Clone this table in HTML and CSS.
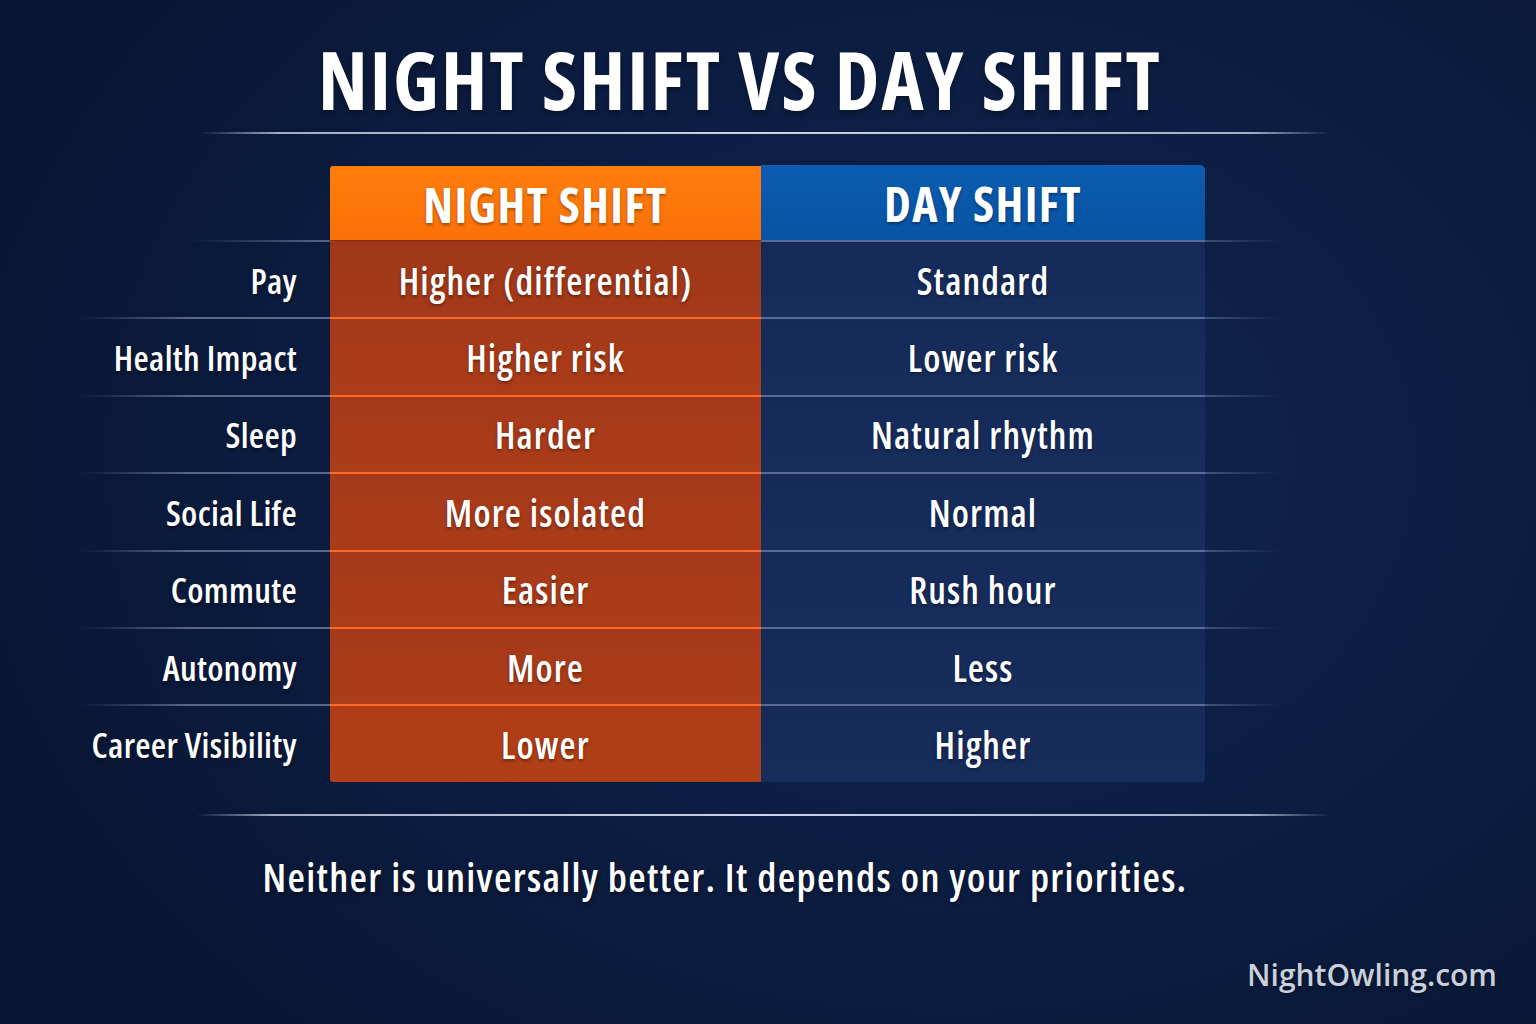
FILE: index.html
```html
<!DOCTYPE html>
<html lang="en">
<head>
<meta charset="utf-8">
<title>Night Shift vs Day Shift</title>
<link rel="stylesheet" href="styles.css">
</head>
<body>
<div class="page">
  <h1 class="title">NIGHT SHIFT VS DAY SHIFT</h1>
  <div class="rule rule-top"></div>

  <div class="table">
    <div class="row head">
      <div class="label"></div>
      <div class="cell night">NIGHT SHIFT</div>
      <div class="cell day">DAY SHIFT</div>
      <div class="pad"></div>
    </div>
    <div class="row body first">
      <div class="label">Pay</div>
      <div class="cell night">Higher (differential)</div>
      <div class="cell day">Standard</div>
      <div class="pad"></div>
    </div>
    <div class="row body">
      <div class="label">Health Impact</div>
      <div class="cell night">Higher risk</div>
      <div class="cell day">Lower risk</div>
      <div class="pad"></div>
    </div>
    <div class="row body">
      <div class="label">Sleep</div>
      <div class="cell night">Harder</div>
      <div class="cell day">Natural rhythm</div>
      <div class="pad"></div>
    </div>
    <div class="row body">
      <div class="label">Social Life</div>
      <div class="cell night">More isolated</div>
      <div class="cell day">Normal</div>
      <div class="pad"></div>
    </div>
    <div class="row body">
      <div class="label">Commute</div>
      <div class="cell night">Easier</div>
      <div class="cell day">Rush hour</div>
      <div class="pad"></div>
    </div>
    <div class="row body">
      <div class="label">Autonomy</div>
      <div class="cell night">More</div>
      <div class="cell day">Less</div>
      <div class="pad"></div>
    </div>
    <div class="row body last">
      <div class="label">Career Visibility</div>
      <div class="cell night">Lower</div>
      <div class="cell day">Higher</div>
      <div class="pad"></div>
    </div>
  </div>

  <div class="rule rule-bottom"></div>
  <p class="footer">Neither is universally better. It depends on your priorities.</p>
  <p class="brand">NightOwling.com</p>
</div>
</body>
</html>
```

FILE: styles.css
```css
* { box-sizing: border-box; margin: 0; padding: 0; }

html, body { width: 1536px; height: 1024px; overflow: hidden; }

body {
  background:
    radial-gradient(ellipse 65% 75% at 62% 45%, #11254f 0%, #0c1d42 55%, #091734 100%);
  font-family: "Open Sans", "Noto Sans", sans-serif;
  color: #ffffff;
}

.page {
  display: flex;
  flex-direction: column;
  height: 1024px;
}

.title {
  font-size: 80px;
  font-weight: 700;
  font-stretch: 75%;
  letter-spacing: 2px;
  line-height: 1;
  text-align: center;
  margin-top: 39px;
  padding-right: 56px;
  text-shadow: 0 3px 4px rgba(0, 0, 0, 0.35);
}

.rule {
  height: 2px;
  background: linear-gradient(90deg,
    rgba(170, 182, 205, 0) 0%,
    rgba(190, 200, 220, 0.85) 7%,
    rgba(215, 222, 235, 0.95) 50%,
    rgba(190, 200, 220, 0.85) 93%,
    rgba(170, 182, 205, 0) 100%);
}

.rule-top { width: 1130px; margin: 13px 0 0 200px; }
.rule-bottom { width: 1134px; margin: 32px 0 0 196px; }

.table {
  margin: 32px 0 0 80px;
  width: 1200px;
}

.row {
  display: grid;
  grid-template-columns: 250px 431px 444px 75px;
}

.head { height: 74px; }

.cell {
  display: flex;
  align-items: center;
  justify-content: center;
  font-weight: 600;
  font-stretch: 75%;
  text-shadow: 0 2px 3px rgba(0, 0, 0, 0.35);
}

.head .cell {
  font-size: 48px;
  font-weight: 700;
  letter-spacing: 1.4px;
  padding-top: 2px;
}

.head .night {
  background: linear-gradient(180deg, #ff7d0d 0%, #fa7109 100%);
  border-radius: 3px 0 0 0;
}

.head .day {
  background: linear-gradient(180deg, #0c5cb1 0%, #0853a3 100%);
  border-radius: 0 5px 0 0;
  margin-top: -1px;
}

.body {
  height: 77.4px;
  background: linear-gradient(90deg,
    rgba(140, 155, 190, 0) 0%,
    rgba(150, 165, 195, 0.55) 9%,
    rgba(160, 175, 205, 0.6) 50%,
    rgba(150, 165, 195, 0.5) 92%,
    rgba(140, 155, 190, 0) 100%) top / 100% 2px no-repeat;
}

.body.first {
  background: linear-gradient(90deg,
    rgba(140, 155, 190, 0) 0%,
    rgba(140, 155, 190, 0) 9%,
    rgba(150, 165, 195, 0.5) 20%,
    rgba(160, 175, 205, 0.6) 60%,
    rgba(150, 165, 195, 0.45) 92%,
    rgba(140, 155, 190, 0) 100%) top / 100% 2px no-repeat;
}

.body .label {
  display: flex;
  align-items: center;
  justify-content: flex-end;
  padding-right: 33px;
  font-size: 35px;
  font-weight: 600;
  font-stretch: 75%;
  letter-spacing: 0.3px;
  text-shadow: 0 2px 3px rgba(0, 0, 0, 0.35);
  padding-top: 3px;
}

.body .cell {
  font-size: 37px;
  letter-spacing: 1.1px;
  padding-top: 3px;
}

.body .night {
  background:
    linear-gradient(#ff6a2a, #ff6a2a) top / 100% 2px no-repeat,
    linear-gradient(180deg, #a5391a 0%, #ab3c18 100%);
}

.body.first .night {
  background:
    linear-gradient(rgba(120, 40, 10, 0.5), rgba(120, 40, 10, 0.5)) top / 100% 1px no-repeat,
    linear-gradient(180deg, #9f3719 0%, #a53a19 100%);
}

.body .day {
  background:
    linear-gradient(rgba(110, 130, 170, 0.75), rgba(110, 130, 170, 0.75)) top / 100% 2px no-repeat,
    linear-gradient(180deg, #152a58 0%, #172d5c 100%);
}

.body.last .night { border-radius: 0 0 0 3px; background:
    linear-gradient(#ff6a2a, #ff6a2a) top / 100% 2px no-repeat,
    linear-gradient(180deg, #ae3d17 0%, #b03e16 100%); }
.body.last .day { border-radius: 0 0 3px 0; }

.footer {
  margin-top: 41px;
  font-size: 40px;
  font-weight: 600;
  font-stretch: 75%;
  letter-spacing: 1.3px;
  line-height: 1;
  text-align: center;
  padding-right: 86px;
  text-shadow: 0 2px 4px rgba(0, 0, 0, 0.45);
}

.brand {
  margin-top: auto;
  margin-bottom: 34px;
  align-self: flex-end;
  margin-right: 39px;
  font-size: 30px;
  font-weight: 600;
  line-height: 1;
  color: #c9d0dc;
  text-shadow: 0 2px 3px rgba(0, 0, 0, 0.4);
}
```
